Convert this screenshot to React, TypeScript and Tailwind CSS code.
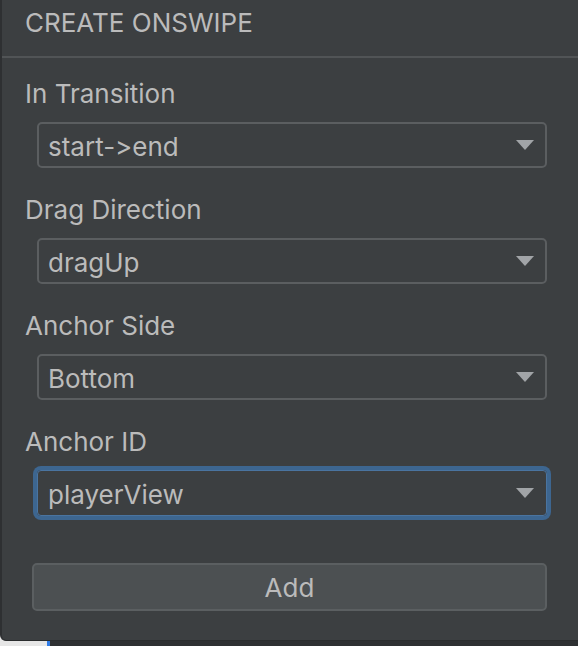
import React from "react";

function Arrow() {
  return (
    <svg width="18" height="10" viewBox="0 0 18 10" className="shrink-0">
      <polygon points="0,0 18,0 9,10" fill="#a1a4a7" />
    </svg>
  );
}

function Select({ value, focused = false }: { value: string; focused?: boolean }) {
  return (
    <div
      className={
        focused
          ? "ml-[35px] mr-[31px] h-[46px] rounded-[4px] border border-[#4a74a0] shadow-[0_0_0_4px_#3d6690] flex items-center pl-[10px] pr-[12px]"
          : "ml-[35px] mr-[31px] h-[46px] rounded-[5px] border-2 border-[#5b5e60] flex items-center pl-[9px] pr-[11px]"
      }
    >
      <span className="flex-1 leading-[30px] pt-[3px] text-[#bbbbbb]">{value}</span>
      <Arrow />
    </div>
  );
}

function Field({ label, value, focused }: { label: string; value: string; focused?: boolean }) {
  return (
    <div className="flex flex-col">
      <div className="pl-[23px] pt-[2px] leading-[30px] text-[#bbbbbb]">{label}</div>
      <div className="h-[13px]" />
      <Select value={value} focused={focused} />
    </div>
  );
}

export default function App() {
  return (
    <div
      className="w-[578px] h-[646px] bg-[#e8e8e8] flex flex-col overflow-hidden text-[26px] [font-feature-settings:'calt'_0,'liga'_0]"
      style={{ fontFamily: "Inter, 'Liberation Sans', sans-serif" }}
    >
      <div className="h-[641px] shrink-0 bg-[#3c3f41] border-l-2 border-[#2e3032] border-b border-b-[#2a2c2d] rounded-bl-[6px] flex flex-col">
        <div className="h-[56px] pt-[8px] pl-[23px] leading-[30px] text-[#bbbbbb]">CREATE ONSWIPE</div>
        <div className="h-[2px] bg-[#515456]" />
        <div className="h-[19px]" />
        <div className="flex flex-col gap-[25px]">
          <Field label="In Transition" value="start->end" />
          <Field label="Drag Direction" value="dragUp" />
          <Field label="Anchor Side" value="Bottom" />
          <Field label="Anchor ID" value="playerView" focused />
        </div>
        <div className="h-[47px]" />
        <div className="ml-[30px] mr-[31px] h-[48px] rounded-[5px] border-2 border-[#5b5f61] bg-[#4c5052] flex items-center justify-center text-[#bbbbbb] leading-[30px] pt-[2px]">
          Add
        </div>
      </div>
      <div className="h-[5px] flex">
        <div className="w-[47px] bg-[#e6e6e6]" />
        <div className="w-[3px] bg-[#2f7be6]" />
        <div className="flex-1 bg-[#2e3032]" />
      </div>
    </div>
  );
}
